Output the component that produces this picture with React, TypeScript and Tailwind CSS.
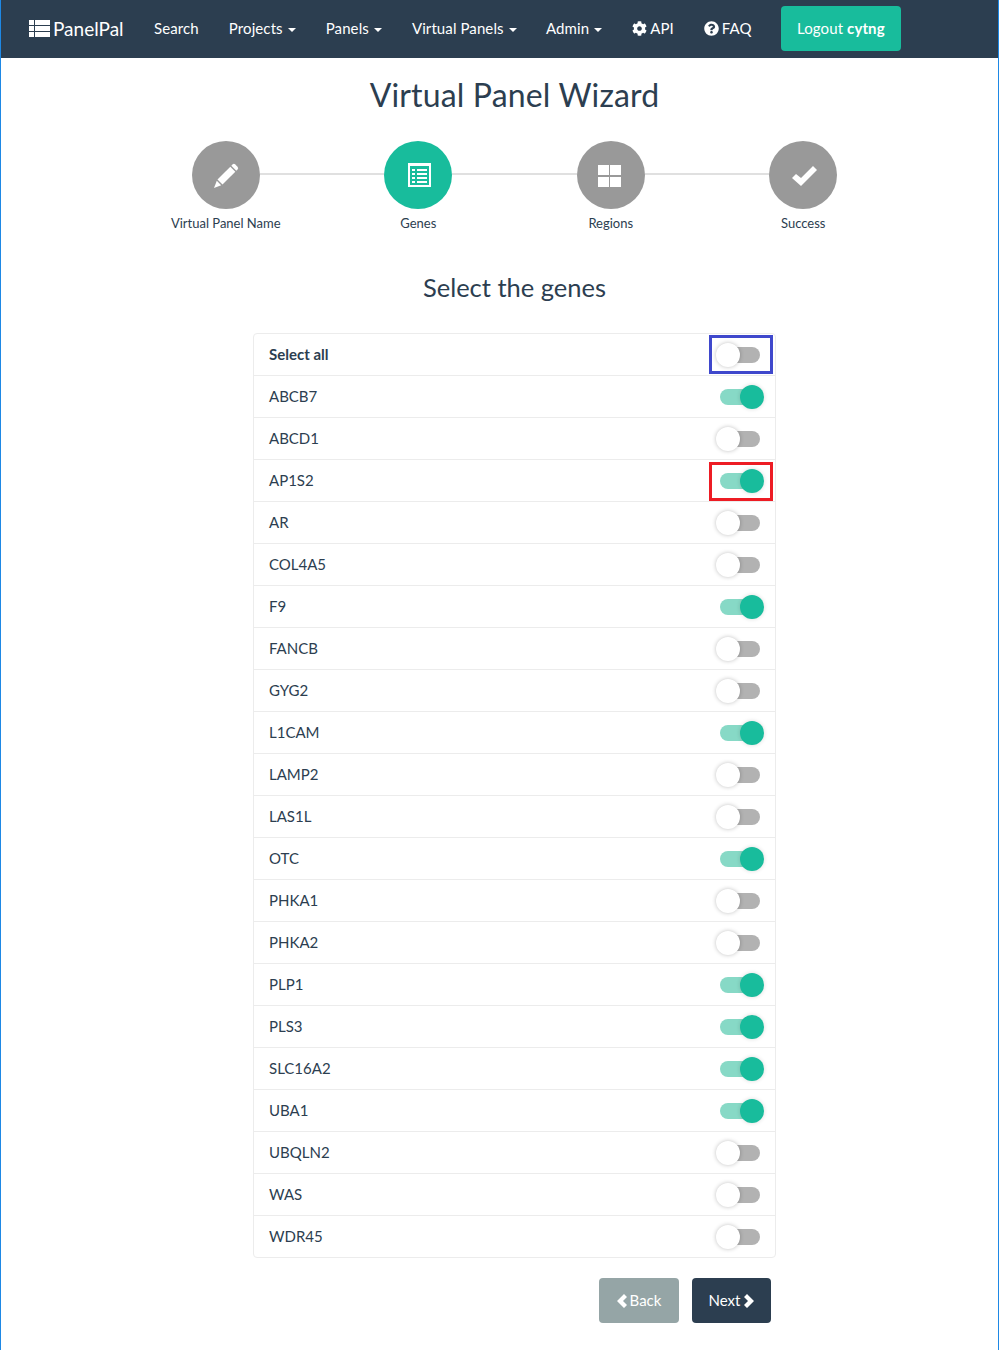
import React from "react";
import { FaCog, FaQuestionCircle } from "react-icons/fa";

const genes: [string, boolean][] = [
  ["ABCB7", true], ["ABCD1", false], ["AP1S2", true], ["AR", false], ["COL4A5", false], ["F9", true],
  ["FANCB", false], ["GYG2", false], ["L1CAM", true], ["LAMP2", false], ["LAS1L", false], ["OTC", true],
  ["PHKA1", false], ["PHKA2", false], ["PLP1", true], ["PLS3", true], ["SLC16A2", true], ["UBA1", true],
  ["UBQLN2", false], ["WAS", false], ["WDR45", false],
];

function Caret() {
  return <span className="ml-[5px] inline-block w-0 h-0 border-x-[4px] border-t-[4px] border-x-transparent border-t-white align-middle" />;
}

function Switch({ on }: { on: boolean }) {
  return (
    <div className="relative w-[50px] h-[24px] flex items-center">
      <div className={`ml-[6px] w-[40px] h-[16px] rounded-full ${on ? "bg-[#87d9c6]" : "bg-[#b2b2b2]"}`} />
      <div
        className={
          on
            ? "absolute left-[26px] top-0 w-[24px] h-[24px] rounded-full bg-[#18bc9c] shadow-[0_0_4px_rgba(0,0,0,0.15)]"
            : "absolute left-[2px] top-0 w-[24px] h-[24px] rounded-full bg-white shadow-[0_0_4px_rgba(0,0,0,0.25)]"
        }
      />
    </div>
  );
}

function Row({ name, on, bold, mark }: { name: string; on: boolean; bold?: boolean; mark?: string }) {
  return (
    <div className="relative h-[42px] flex items-center justify-between pl-[15px] pr-[11px] border-b border-[#ececec] last:border-b-0 last:h-[41px]">
      <span className={bold ? "font-bold" : ""}>{name}</span>
      <Switch on={on} />
      {mark === "blue" && <div className="absolute left-[455px] top-[1px] w-[64px] h-[39px] border-[3px] border-[#3f48cc]" />}
      {mark === "red" && <div className="absolute left-[455px] top-[2px] w-[64px] h-[39px] border-[3px] border-[#ed1c24]" />}
    </div>
  );
}

function Circle({ active, children }: { active?: boolean; children: React.ReactNode }) {
  return (
    <div className={`w-[68px] h-[68px] shrink-0 rounded-full flex items-center justify-center text-white ${active ? "bg-[#18bc9c]" : "bg-[#999999]"}`}>
      {children}
    </div>
  );
}

function Line() {
  return <div className="flex-1 h-[2px] bg-[#e0e0e0] -mt-[2px]" />;
}

function ChevronLeft() {
  return (
    <svg width="10" height="14" viewBox="0 0 10 14" fill="currentColor">
      <path d="M7 0l3 3-4 4 4 4-3 3-7-7z" />
    </svg>
  );
}

function ChevronRight() {
  return (
    <svg width="10" height="14" viewBox="0 0 10 14" fill="currentColor">
      <path d="M3 0L0 3l4 4-4 4 3 3 7-7z" />
    </svg>
  );
}

export default function App() {
  return (
    <div className="min-h-[1350px] bg-white border-x border-[#1e88e5] text-[#2c3e50] text-[15px] leading-[21px]" style={{ fontFamily: "Lato, sans-serif" }}>
      <nav className="h-[58px] bg-[#2c3e50] text-white flex items-center pl-[28px] pb-[2px] gap-[30px] tracking-[0.1px]">
        <div className="flex items-center gap-[3px] mr-[0.5px] text-[19px] tracking-normal">
          <svg width="21" height="17" viewBox="0 0 21 17" fill="currentColor" className="mt-[1px]">
            <rect x="0" y="0" width="5" height="5" /><rect x="6" y="0" width="15" height="5" />
            <rect x="0" y="6" width="5" height="5" /><rect x="6" y="6" width="15" height="5" />
            <rect x="0" y="12" width="5" height="5" /><rect x="6" y="12" width="15" height="5" />
          </svg>
          <span>PanelPal</span>
        </div>
        <span>Search</span>
        <span>Projects<Caret /></span>
        <span>Panels<Caret /></span>
        <span>Virtual Panels<Caret /></span>
        <span className="-ml-[0.7px]">Admin<Caret /></span>
        <span className="flex items-center gap-[3px]"><FaCog className="w-[15px] h-[15px]" />API</span>
        <span className="flex items-center gap-[3px]"><FaQuestionCircle className="w-[15px] h-[15px]" />FAQ</span>
        <div className="w-[120px] h-[45px] -ml-[0.8px] rounded-[4px] bg-[#18bc9c] flex items-center justify-center">
          <span>Logout <b>cytng</b></span>
        </div>
      </nav>

      <main className="flex flex-col items-center pl-[30px]">
        <h1 className="mt-[18px] text-[32px] leading-[38px] tracking-[0.15px]">Virtual Panel Wizard</h1>

        <div className="mt-[27px] w-[770px]">
          <div className="flex items-center px-[62.5px]">
            <Circle>
              <svg width="25" height="25" viewBox="0 0 25 25" fill="currentColor">
                <path d="M18.5 1.5a2 2 0 0 1 2.8 0l2.2 2.2a2 2 0 0 1 0 2.8l-1.2 1.2-5-5z" />
                <path d="M16.3 3.7l5 5L8.5 21.5l-5-5z" />
                <path d="M2.8 17.8l4.4 4.4L0 25z" />
              </svg>
            </Circle>
            <Line />
            <Circle active>
              <svg width="23" height="24" viewBox="0 0 23 24" fill="currentColor" className="ml-[2px]">
                <path fillRule="evenodd" d="M0 0h23v24H0zM2 3v19h19V3zM4 6h3v2H4zM9 6h10v2H9zM4 10h3v2H4zM9 10h10v2H9zM4 14h3v2H4zM9 14h10v2H9zM4 18h3v2H4zM9 18h10v2H9z" />
              </svg>
            </Circle>
            <Line />
            <Circle>
              <svg width="23" height="22" viewBox="0 0 23 22" fill="currentColor" className="mt-[1px] mr-[2px]">
                <rect x="0" y="0" width="11" height="10" /><rect x="12" y="0" width="11" height="10" />
                <rect x="0" y="12" width="11" height="10" /><rect x="12" y="12" width="11" height="10" />
              </svg>
            </Circle>
            <Line />
            <Circle>
              <svg width="25" height="20" viewBox="0 0 25 20" fill="currentColor" className="mt-[1px] ml-[4px]">
                <path d="M0 12l4-4 5 4L21 0l4 4L9 20z" />
              </svg>
            </Circle>
          </div>
          <div className="mt-[5px] grid grid-cols-4 text-center text-[13px] leading-[18px]">
            <span>Virtual Panel Name</span>
            <span>Genes</span>
            <span>Regions</span>
            <span>Success</span>
          </div>
        </div>

        <h3 className="mt-[39px] text-[25.5px] leading-[32px]">Select the genes</h3>

        <div className="mt-[30px] w-[523px] border border-[#ececec] rounded-[4px]">
          <Row name="Select all" on={false} bold mark="blue" />
          {genes.map(([n, on]) => (
            <Row key={n} name={n} on={on} mark={n === "AP1S2" ? "red" : undefined} />
          ))}
        </div>

        <div className="mt-[20px] w-[523px] flex justify-end gap-[13px] pr-[5px]">
          <div className="w-[80px] h-[45px] rounded-[4px] bg-[#95a5a6] text-white flex items-center justify-center gap-[3px]">
            <ChevronLeft />Back
          </div>
          <div className="w-[79px] h-[45px] rounded-[4px] bg-[#2c3e50] text-white flex items-center justify-center gap-[4px]">
            Next<ChevronRight />
          </div>
        </div>
      </main>
    </div>
  );
}
